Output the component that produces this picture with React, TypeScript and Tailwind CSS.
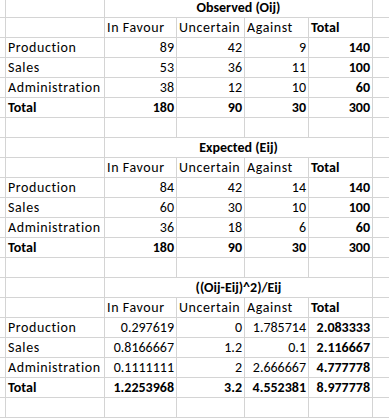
import { Fragment } from "react";

type Row = { label: string; cells: string[]; total?: boolean };
type Section = { title: string; rows: Row[] };

const headers = ["In Favour", "Uncertain", "Against", "Total"];

const sections: Section[] = [
    {
        title: "Observed (Oij)",
        rows: [
            { label: "Production", cells: ["89", "42", "9", "140"] },
            { label: "Sales", cells: ["53", "36", "11", "100"] },
            { label: "Administration", cells: ["38", "12", "10", "60"] },
            { label: "Total", cells: ["180", "90", "30", "300"], total: true },
        ],
    },
    {
        title: "Expected (Eij)",
        rows: [
            { label: "Production", cells: ["84", "42", "14", "140"] },
            { label: "Sales", cells: ["60", "30", "10", "100"] },
            { label: "Administration", cells: ["36", "18", "6", "60"] },
            { label: "Total", cells: ["180", "90", "30", "300"], total: true },
        ],
    },
    {
        title: "((Oij-Eij)^2)/Eij",
        rows: [
            { label: "Production", cells: ["0.297619", "0", "1.785714", "2.083333"] },
            { label: "Sales", cells: ["0.8166667", "1.2", "0.1", "2.116667"] },
            { label: "Administration", cells: ["0.1111111", "2", "2.666667", "4.777778"] },
            { label: "Total", cells: ["1.2253968", "3.2", "4.552381", "8.977778"], total: true },
        ],
    },
];

function Cell({ children, className = "" }: { children?: React.ReactNode; className?: string }) {
    return (
        <div className={`flex items-end overflow-visible whitespace-nowrap bg-white px-[2px] leading-[19px] ${className}`}>
            {children}
        </div>
    );
}

function EmptyRow() {
    return (
        <>
            <Cell />
            <Cell />
            <Cell />
            <Cell />
            <Cell />
            <Cell />
            <Cell />
        </>
    );
}

export default function App() {
    return (
        <main className="h-[418px] w-[389px] overflow-hidden bg-white font-['Calibri','Lato',sans-serif] text-[14px] text-black">
            <div className="grid grid-cols-[5px_98px_71px_67px_63px_63px_1fr] grid-rows-[17px] auto-rows-[19px] gap-px bg-[#d4d4d4]">
                {sections.map((section, i) => (
                    <Fragment key={section.title}>
                        {i > 0 && <EmptyRow />}
                        {/* merged title row */}
                        <Cell />
                        <Cell />
                        <Cell className="col-span-4 justify-center font-bold">{section.title}</Cell>
                        <Cell />

                        <Cell />
                        <Cell />
                        {headers.map((h) => (
                            <Cell key={h} className={h === "Total" ? "font-bold" : "tracking-[0.6px]"}>
                                {h}
                            </Cell>
                        ))}
                        <Cell />

                        {section.rows.map((row) => (
                            <Fragment key={row.label}>
                                <Cell />
                                <Cell className={row.total ? "font-bold" : "tracking-[0.6px]"}>{row.label}</Cell>
                                {row.cells.map((value, j) => (
                                    <Cell
                                        key={j}
                                        className={`justify-end ${row.total || j === 3 ? "font-bold" : ""}`}
                                    >
                                        {value}
                                    </Cell>
                                ))}
                                <Cell />
                            </Fragment>
                        ))}
                    </Fragment>
                ))}
                <EmptyRow />
                <EmptyRow />
            </div>
        </main>
    );
}
